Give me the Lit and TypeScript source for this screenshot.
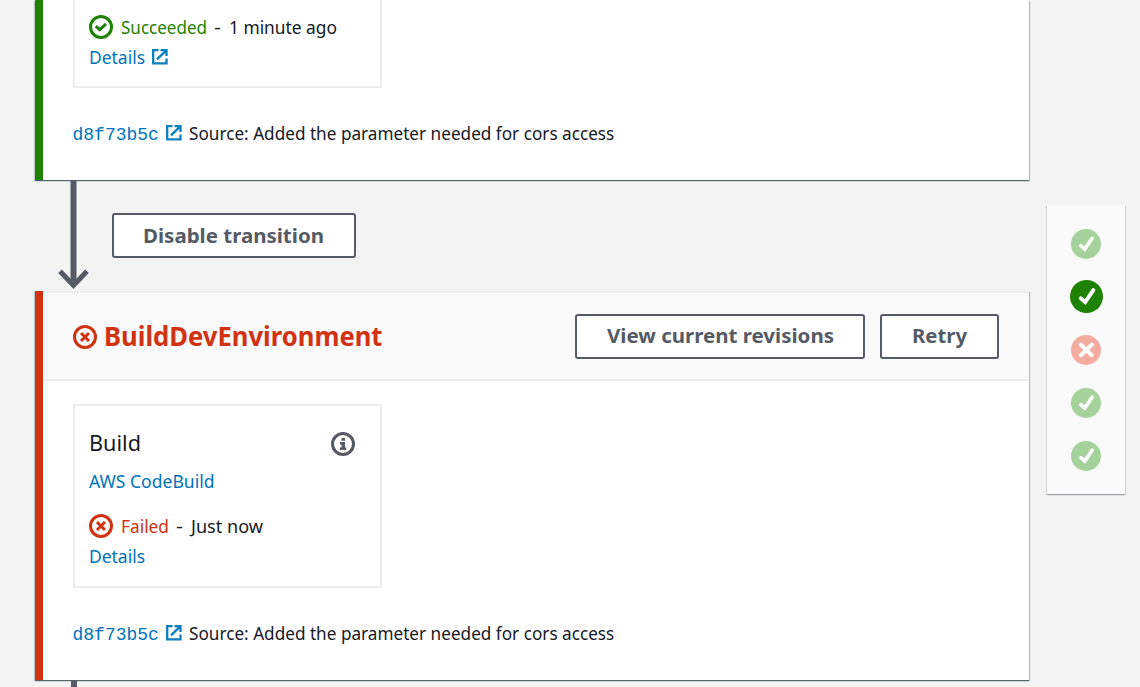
import { LitElement, html, svg, css } from "lit";
import { customElement, property } from "lit/decorators.js";

/** A line of text condensed or widened horizontally to a given advance width. */
@customElement("fit-text")
class FitText extends LitElement {
  @property({ type: Number }) width = 100;
  @property() text = "";

  static styles = css`
    :host { display: inline-block; white-space: nowrap; flex: none; }
    .line { display: inline-block; transform-origin: 0 50%; white-space: pre; }
  `;

  firstUpdated() {
    const line = this.renderRoot.querySelector(".line") as HTMLElement;
    const natural = line.getBoundingClientRect().width;
    this.style.width = `${this.width}px`;
    line.style.transform = `scaleX(${this.width / natural})`;
  }

  render() {
    return html`<span class="line">${this.text}</span>`;
  }
}

const fit = (text: string, width: number) => html`<fit-text .text=${text} .width=${width}></fit-text>`;

const statusIcon = (ok: boolean) => html`
  <svg class="status ${ok ? "ok" : "bad"}" width="24" height="24" viewBox="0 0 24 24">
    <circle cx="12" cy="12" r="10.5" fill="none" stroke="currentColor" stroke-width="3" />
    <path d=${ok ? "M6.8 11.2L10.8 14.8L17 8.8" : "M8 8L16 16M16 8L8 16"}
      fill="none" stroke="currentColor" stroke-width="3" />
  </svg>`;

const externalIcon = () => html`
  <svg class="external" width="16" height="16" viewBox="0 0 16 16" fill="none" stroke="currentColor" stroke-width="2.3">
    <path d="M6.5 1.2H1.2V14.3H14.5V9.5" />
    <path d="M8.5 1.2H14.5V7M14.2 1.4L5 10.4" />
  </svg>`;

const infoIcon = () => html`
  <svg class="info" width="24" height="24" viewBox="0 0 24 24">
    <circle cx="12" cy="12" r="10.5" fill="none" stroke="currentColor" stroke-width="3" />
    <path d="M10.5 6H14V8.8H10.5zM9 10H14V15.4H15.2V18H9V15.4H10.5V12.4H9z" fill="currentColor" />
  </svg>`;

const dot = (ok: boolean, active = false) => html`
  <svg class="dot ${ok ? "ok" : "bad"} ${active ? "active" : ""}" viewBox="0 0 30 30">
    <circle cx="15" cy="15" r="15" fill="currentColor" />
    ${ok
      ? svg`<path d="M9.8 16.6L13.8 20L21.2 9.2" />`
      : svg`<path d="M9.8 9.6L20.8 20.2M20.8 9.6L9.8 20.2" />`}
  </svg>`;

const revision = () => html`
  <div class="revision">
    <a class="commit">d8f73b5c</a>
    ${externalIcon()}
    ${fit("Source: Added the parameter needed for cors access", 425.3)}
  </div>`;

@customElement("app-root")
class AppRoot extends LitElement {
  static styles = css`
    :host {
      display: block;
      width: 1140px;
      height: 687px;
      overflow: hidden;
      background: #f2f3f3;
      color: #16191f;
      font: 18px/30px "Noto Sans", sans-serif;
    }
    * { box-sizing: border-box; }
    .page { display: flex; padding-left: 35px; gap: 18px; align-items: flex-start; height: 687px; }
    .pipeline { width: 994px; flex: none; }
    .stage {
      background: #fff;
      border-left: 8px solid;
      box-shadow: 0 1px 1px 0 rgba(0, 28, 36, .5), 1px 1px 1px 0 rgba(0, 28, 36, .2), -1px 1px 1px 0 rgba(0, 28, 36, .15);
    }
    .stage.first { height: 180px; border-color: #1d8102; padding-left: 30px; }
    .stage.second { height: 389px; border-color: #d13212; }
    .header {
      display: flex; align-items: center; height: 90px; padding: 0 30px;
      background: #fafafa; border-top: 2px solid #eaeded; border-bottom: 2px solid #eaeded;
    }
    .title { margin-left: 7px; color: #d13212; font-size: 26px; font-weight: 700; line-height: 36px; flex: 1; }
    .button {
      display: flex; align-items: center; justify-content: center; height: 45px;
      border: 2px solid #545b64; border-radius: 3px; background: #fff; color: #545b64;
      font-size: 20px; font-weight: 700; line-height: 28px;
    }
    .button.disable { width: 244px; padding-right: 1px; }
    .button.view { width: 290px; margin-right: 15px; }
    .button.retry { width: 119px; padding-right: 1px; }
    .body { padding: 23px 30px 0; }
    .action { width: 309px; border: 2px solid #eaeded; padding-left: 14px; }
    .action.done { height: 88px; border-top: 0; padding-top: 12px; }
    .action.failed { height: 184px; padding-top: 21px; }
    .row { display: flex; align-items: center; height: 30px; }
    .heading { font-size: 22px; height: 32px; justify-content: space-between; padding-right: 25px; }
    .heading fit-text { margin-top: -2px; }
    .provider { margin: 7px 0 15px; }
    .status { margin-right: 7.5px; flex: none; }
    .title-icon .status { margin: 2px 0 0; display: block; }
    .ok { color: #1d8102; }
    .bad { color: #d13212; }
    .link, .commit { color: #0073bb; }
    .external { flex: none; color: #0a7fc0; margin-top: -1px; }
    .link + .external { margin-left: 7px; }
    .dash { margin: 0 8px 0 7.5px; }
    .info { color: #545b64; margin-top: 2px; }
    .revision { display: flex; align-items: center; height: 30px; margin-top: 30px; }
    .commit { font-family: "Liberation Mono", monospace; line-height: 30px; margin: 3px 7px 0 -.5px; }
    .revision .external { margin-right: 7px; }
    .transition { display: flex; height: 111px; padding-left: 23px; }
    .transition .button { margin: 33px 0 0 23px; }
    .arrow { display: block; color: #545b64; }
    .tail { display: block; margin-left: 35.5px; width: 6px; height: 7px; background: #545b64; }
    .tracker {
      display: flex; flex-direction: column; align-items: center; width: 78px; height: 289px;
      margin-top: 205px; padding-top: 23.5px; gap: 23px; background: #fafafa;
      box-shadow: 0 1px 1px 0 rgba(0, 28, 36, .22), 1px 1px 1px 0 rgba(0, 28, 36, .1), -1px 1px 1px 0 rgba(0, 28, 36, .1);
    }
    .dot { width: 30px; height: 30px; flex: none; fill: none; stroke-width: 0; overflow: visible; }
    .dot path { stroke: #fff; stroke-width: 3.6; stroke-linecap: round; }
    .dot.ok { color: #a5d19a; }
    .dot.bad { color: #f5aca0; }
    .dot.bad path { stroke-width: 4; }
    .dot.active { color: #1d8102; width: 33px; height: 33px; margin: -1.5px 0; }
  `;

  render() {
    return html`
      <div class="page">
        <div class="pipeline">
          <section class="stage first">
            <div class="action done">
              <div class="row">
                ${statusIcon(true)}<span class="ok">${fit("Succeeded", 86)}</span>
                <span class="dash">${fit("-", 7)}</span>${fit("1 minute ago", 108)}
              </div>
              <div class="row"><a class="link">${fit("Details", 56)}</a>${externalIcon()}</div>
            </div>
            ${revision()}
          </section>

          <div class="transition">
            <svg class="arrow" width="31" height="111" viewBox="0 0 31 111" fill="none" stroke="currentColor">
              <path d="M15.5 0V105" stroke-width="6" />
              <path d="M2 91.3L15.5 105.3L29 91.3" stroke-width="5" />
            </svg>
            <div class="button disable">${fit("Disable transition", 181)}</div>
          </div>

          <section class="stage second">
            <header class="header">
              <span class="title-icon">${statusIcon(false)}</span>
              <span class="title">${fit("BuildDevEnvironment", 278.5)}</span>
              <div class="button view">${fit("View current revisions", 227)}</div>
              <div class="button retry">${fit("Retry", 55)}</div>
            </header>
            <div class="body">
              <div class="action failed">
                <div class="row heading">${fit("Build", 52)}${infoIcon()}</div>
                <div class="row provider"><a class="link">${fit("AWS CodeBuild", 125.5)}</a></div>
                <div class="row">
                  ${statusIcon(false)}<span class="bad">${fit("Failed", 48)}</span>
                  <span class="dash">${fit("-", 7)}</span>${fit("Just now", 72)}
                </div>
                <div class="row"><a class="link">${fit("Details", 56)}</a></div>
              </div>
              ${revision()}
            </div>
          </section>
          <span class="tail"></span>
        </div>

        <aside class="tracker">
          ${dot(true)}${dot(true, true)}${dot(false)}${dot(true)}${dot(true)}
        </aside>
      </div>
    `;
  }
}
